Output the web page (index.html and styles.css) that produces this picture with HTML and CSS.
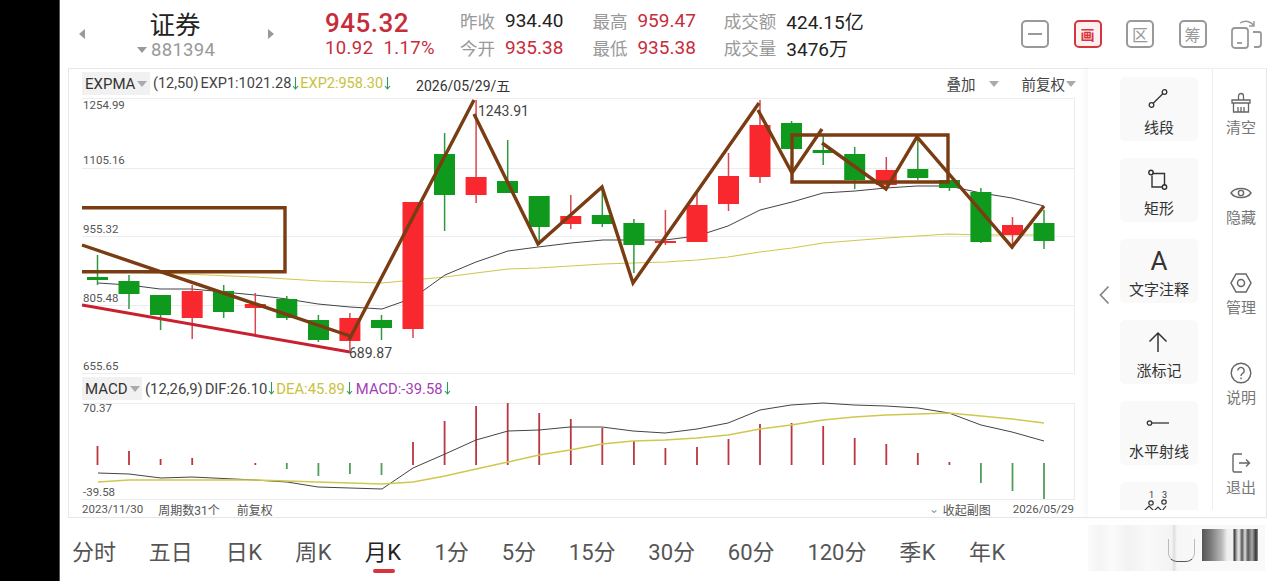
FILE: index.html
```html
<!DOCTYPE html>
<html lang="zh-CN">
<head>
  <meta charset="UTF-8" />
  <title>证券 881394</title>
  <link rel="stylesheet" href="styles.css">
</head>
<body>
  <div class="bezel"></div>
  <div class="app">
    <header class="top">
      <span class="arrow-left"></span>
      <div class="name">
        <div class="name-title">证券</div>
        <div class="name-code"><span class="tri"></span>881394</div>
      </div>
      <span class="arrow-right"></span>
      <div class="price">
        <div class="price-now">945.32</div>
        <div class="price-change">10.92&nbsp;&nbsp;1.17%</div>
      </div>
      <div class="stat stat-a">
        <div class="stat-row"><span class="stat-label">昨收</span><span class="stat-val">934.40</span></div>
        <div class="stat-row"><span class="stat-label">今开</span><span class="stat-val up">935.38</span></div>
      </div>
      <div class="stat stat-b">
        <div class="stat-row"><span class="stat-label">最高</span><span class="stat-val up">959.47</span></div>
        <div class="stat-row"><span class="stat-label">最低</span><span class="stat-val up">935.38</span></div>
      </div>
      <div class="stat stat-c">
        <div class="stat-row"><span class="stat-label">成交额</span><span class="stat-val">424.15亿</span></div>
        <div class="stat-row"><span class="stat-label">成交量</span><span class="stat-val">3476万</span></div>
      </div>
      <div class="modes">
        <div class="mode"><span class="mode-dash"></span></div>
        <div class="mode mode-on">画</div>
        <div class="mode">区</div>
        <div class="mode">筹</div>
        <svg class="mode-rotate" width="31" height="30" viewBox="0 0 31 30" fill="none" stroke="#999" stroke-width="1.8">
          <rect x="1" y="9" width="16" height="20" rx="3"/>
          <path d="M6 24h5"/>
          <path d="M9 4c5-3 11-2 14 3M23 2v5h-5" stroke-width="1.4"/>
          <path d="M22 13h6a2 2 0 0 1 2 2v10a3 3 0 0 1-3 3h-4"/>
        </svg>
      </div>
    </header>

    <div class="middle">
      <section class="chart">
        <div class="chart-head chart-head-main">
          <span class="ind-box ind-box-main">EXPMA<span class="tri tri-light"></span></span>
          <span class="ind-params">(12,50)</span>
          <span class="ind-v">EXP1:1021.28</span>
          <svg class="down" width="7" height="13" viewBox="0 0 7 13"><path d="M3.500 0V12M1 9L3.500 12L6 9"/></svg>
          <span class="ind-v ind-yellow">EXP2:958.30</span>
          <svg class="down" width="7" height="13" viewBox="0 0 7 13"><path d="M3.500 0V12M1 9L3.500 12L6 9"/></svg>
          <span class="chart-date">2026/05/29/五</span>
          <span class="chart-opts">
            <span>叠加</span><span class="tri tri-light opt-tri"></span>
            <span class="opt-fq">前复权</span><span class="tri tri-light"></span>
          </span>
        </div>

        <svg class="plot plot-main" width="993" height="276" viewBox="82 98 993 276">
          <path class="grid" d="M82 98.500H1075M82 168.500H1075M82 236.500H1075M82 305.500H1075M82 373.500H1075M1074.500 98V374"/>
          <polyline class="ma-yellow" points="98,272 160,273 255,277 320,281 382,283 413,280 445,277 476,273 508,269 538,268 603,264 633,263 665,262 697,260 728,257 760,252 792,248 823,243 886,238 917,236 949,234 981,235 1044,235"/>
          <polyline class="ma-black" points="98,283 129,285 160,289 192,289 255,295 287,299 318,304 350,307 382,309 413,298 445,275 476,262 508,251 538,247 571,243 603,240 633,240 665,240 697,236 728,226 760,210 792,202 823,193 855,191 886,188 917,186 949,186 981,193 1012,198 1044,206"/>

          <path class="wick-green" d="M97.500 255V285M129 275V309M160.600 295V330M223.700 285V318M286.800 296V320M318.400 315V342M381.500 315V340M444.600 133V231M507.700 140V193M539.200 196V245M602.300 190V227M633.900 219V273M791.600 121V149M823.200 135V165M854.700 147V189M917.800 140V180M949.400 180V191M980.900 188V243M1044 210V249"/>
          <path class="wick-red" d="M192.200 285V339M255.300 293V334M349.900 313V350M413 202V338M476.100 100V203M570.800 195V229M665.400 210V245M697 192V242M728.500 153V211M760 100V183M886.300 157V190M1012.500 217V249"/>
          <path class="body-green" d="M87 277h21v3h-21zM118.500 281h21v13h-21zM150 295h21v20h-21zM213 291h21v21h-21zM276.300 299h21v19h-21zM308 320h21v20h-21zM371 320h21v8h-21zM434 154h21v41h-21zM497 181h21v12h-21zM528.700 196h21v31h-21zM591.800 215h21v9h-21zM623.400 223h21v22h-21zM781 123h21v26h-21zM812.700 150h21v3h-21zM844.200 154h21v26h-21zM907.300 169h21v9h-21zM939 180h21v8h-21zM970.400 192h21v50h-21zM1033.500 223h21v18h-21z"/>
          <path class="body-red" d="M181.700 291h21v27h-21zM244.800 304h21v4h-21zM339.400 318h21v23h-21zM402.500 202h21v127h-21zM465.600 177h21v18h-21zM560.300 216h21v8h-21zM654.900 241h21v2h-21zM686.500 205h21v37h-21zM718 176h21v28h-21zM749.500 125h21v52h-21zM875.800 170h21v15h-21zM1002 225h21v10h-21z"/>

          <line class="trend-red" x1="82" y1="305" x2="350" y2="352"/>
          <path class="draw" d="M82 207.700H285V271.700H82"/>
          <path class="draw" d="M792 135H948V182H792Z"/>
          <path class="draw" d="M82 245L350 336M349 340L474 100M474 114L538 244L602 187L633 283L759 103M758 110L792 173L822 129M822 143L886 189L917 137L1012 247L1044 206"/>

          <text class="axis" x="83" y="109">1254.99</text>
          <text class="axis" x="83" y="164">1105.16</text>
          <text class="axis" x="83" y="233">955.32</text>
          <text class="axis" x="83" y="302">805.48</text>
          <text class="axis" x="83" y="370">655.65</text>
          <text class="mark" x="478" y="116">1243.91</text>
          <text class="mark" x="349" y="358">689.87</text>
        </svg>

        <div class="chart-head">
          <span class="ind-box ind-box-macd">MACD<span class="tri tri-light"></span></span>
          <span class="ind-params">(12,26,9)</span>
          <span class="ind-v">DIF:26.10</span>
          <svg class="down" width="7" height="13" viewBox="0 0 7 13"><path d="M3.500 0V12M1 9L3.500 12L6 9"/></svg>
          <span class="ind-v ind-yellow">DEA:45.89</span>
          <svg class="down" width="7" height="13" viewBox="0 0 7 13"><path d="M3.500 0V12M1 9L3.500 12L6 9"/></svg>
          <span class="ind-v ind-purple ind-gap">MACD:-39.58</span>
          <svg class="down" width="7" height="13" viewBox="0 0 7 13"><path d="M3.500 0V12M1 9L3.500 12L6 9"/></svg>
        </div>

        <svg class="plot plot-macd" width="993" height="97" viewBox="82 403 993 97">
          <path class="grid" d="M82 403.500H1075M82 499.500H1075M1074.500 403V500"/>
          <path class="bar-red" d="M97.500 446V465M129 451V465M160.600 459V465M192.200 458V465M255.300 463V465M413 442V465M444.600 421V465M476.100 406V465M507.700 403V465M539.200 413V465M570.800 419V465M602.300 428V465M633.900 441V465M665.400 448V465M697 447V465M728.500 439V465M760 424V465M791.600 423V465M823.200 426V465M854.700 438V465M886.300 444V465M917.800 453V465M949.400 462V465"/>
          <path class="bar-green" d="M286.800 463V469M318.400 463V476M349.900 463V474M381.500 463V475M980.900 463V483M1012.500 463V491M1044 463V499"/>
          <polyline class="ma-black" points="98,473 129,474 161,478 192,477 255,480 287,482 318,487 350,488 382,489 413,468 445,454 476,440 508,431 539,430 570,427 602,427 633,431 665,433 697,429 728,423 760,410 791,405 823,403 854,405 886,406 918,408 949,413 981,425 1012,432 1044,441"/>
          <polyline class="ma-yellow ma-thick" points="98,482 129,480 192,480 255,480 318,482 382,484 413,482 445,476 476,469 508,462 539,455 570,450 602,444 633,441 665,440 697,438 728,435 760,429 791,425 823,420 854,417 886,415 918,414 949,413 981,416 1012,419 1044,423"/>
          <text class="axis" x="83" y="412">70.37</text>
          <text class="axis" x="83" y="496">-39.58</text>
        </svg>

        <div class="chart-foot">
          <span class="foot-date">2023/11/30</span>
          <span class="foot-count">周期数31个</span>
          <span class="foot-fq">前复权</span>
          <span class="foot-right">
            <span class="foot-fold">⌄</span><span>收起副图</span>
            <span class="foot-date foot-end">2026/05/29</span>
          </span>
        </div>
      </section>

      <aside class="tools">
        <span class="tools-back">
          <svg width="11" height="20" viewBox="0 0 11 20" fill="none" stroke="#888" stroke-width="1.8"><path d="M9.500 1.500L1.500 10L9.500 18.500"/></svg>
        </span>
        <div class="tool-list">
          <div class="tool">
            <svg width="24" height="24" viewBox="0 0 24 24" fill="none" stroke="#333" stroke-width="1.3"><circle cx="5.500" cy="18" r="2.300"/><circle cx="18.500" cy="5" r="2.300"/><path d="M7.200 16.300L16.800 6.700"/></svg>
            <span>线段</span>
          </div>
          <div class="tool">
            <svg width="24" height="24" viewBox="0 0 24 24" fill="none" stroke="#333" stroke-width="1.4"><path d="M6 5.500H18.500V17.500M16.500 19H6V7.500"/><circle cx="5" cy="4.500" r="2.200"/><circle cx="18.500" cy="19" r="2.200"/></svg>
            <span>矩形</span>
          </div>
          <div class="tool">
            <span class="tool-a">A</span>
            <span>文字注释</span>
          </div>
          <div class="tool">
            <svg width="24" height="24" viewBox="0 0 24 24" fill="none" stroke="#333" stroke-width="1.5"><path d="M12 22V3M3.500 11.500L12 3L20.500 11.500"/></svg>
            <span>涨标记</span>
          </div>
          <div class="tool">
            <svg width="24" height="24" viewBox="0 0 24 24" fill="none" stroke="#333" stroke-width="1.3"><circle cx="3.500" cy="12" r="2.200"/><path d="M6 12H23"/></svg>
            <span>水平射线</span>
          </div>
          <div class="tool tool-cut">
            <svg width="30" height="24" viewBox="0 0 30 24" fill="none" stroke="#333" stroke-width="1.2">
              <path d="M1 21L6 16L11 21L15 17L19 21L23 16"/>
              <circle cx="8" cy="13" r="2.200"/><circle cx="21" cy="12" r="2.200"/>
              <text class="tool-num" x="6" y="8">1</text><text class="tool-num" x="19" y="8">3</text>
            </svg>
          </div>
        </div>
        <div class="tool-side">
          <div class="side-item">
            <svg width="22" height="22" viewBox="0 0 22 22" fill="none" stroke="#666" stroke-width="1.3"><path d="M8.500 8V4a2.500 2.500 0 0 1 5 0v4M2 8H20V11H2ZM3.500 11V20H18.500V11M8 15V20M11 15V20M14 15V20"/></svg>
            <span>清空</span>
          </div>
          <div class="side-item">
            <svg width="22" height="22" viewBox="0 0 22 22" fill="none" stroke="#666" stroke-width="1.4"><path d="M1 11C5 5 17 5 21 11C17 17 5 17 1 11Z"/><circle cx="11" cy="11" r="2.600"/></svg>
            <span>隐藏</span>
          </div>
          <div class="side-item">
            <svg width="22" height="22" viewBox="0 0 22 22" fill="none" stroke="#666" stroke-width="1.5"><path d="M6 2H16L21 11L16 20H6L1 11Z"/><circle cx="11" cy="11" r="3.500"/></svg>
            <span>管理</span>
          </div>
          <div class="side-item">
            <svg width="22" height="22" viewBox="0 0 22 22" fill="none" stroke="#666" stroke-width="1.4"><circle cx="11" cy="11" r="9.800"/><path d="M7.800 8.600a3.200 3.200 0 1 1 4.800 2.800c-1 .6-1.600 1.200-1.600 2.600"/><path d="M11 15.600v1.600"/></svg>
            <span>说明</span>
          </div>
          <div class="side-item">
            <svg width="22" height="22" viewBox="0 0 22 22" fill="none" stroke="#666" stroke-width="1.4"><path d="M12 2H4.500A1.500 1.500 0 0 0 3 3.500V18.500A1.500 1.500 0 0 0 4.500 20H12M9 11H19.500M16 7.500L19.500 11L16 14.500"/></svg>
            <span>退出</span>
          </div>
        </div>
      </aside>
    </div>

    <nav class="periods">
      <span>分时</span>
      <span>五日</span>
      <span class="tab-k">日K</span>
      <span class="tab-k">周K</span>
      <span class="tab-k period-on">月K</span>
      <span>1分</span>
      <span>5分</span>
      <span>15分</span>
      <span>30分</span>
      <span>60分</span>
      <span>120分</span>
      <span class="tab-k">季K</span>
      <span class="tab-k">年K</span>
      <div class="smear"></div>
    </nav>
  </div>
</body>
</html>
```
FILE: styles.css
```css
* {
  margin: 0;
  padding: 0;
  box-sizing: border-box;
}

html, body {
  height: 581px;
  overflow: hidden;
}

body {
  display: flex;
  font-family: 'Roboto', 'Noto Sans CJK SC', sans-serif;
  background-color: #fff;
  color: #333;
}

.bezel {
  width: 60px;
  background-color: #000;
  border-right: 1px solid #555;
}

.app {
  flex: 1;
  display: flex;
  flex-direction: column;
  min-width: 0;
}

/* top quote bar */
.top {
  height: 68px;
  display: flex;
  align-items: center;
}

.arrow-left, .arrow-right {
  width: 0;
  height: 0;
  border-top: 5px solid transparent;
  border-bottom: 5px solid transparent;
}

.arrow-left {
  margin-left: 19px;
  border-right: 6px solid #999;
}

.arrow-right {
  border-left: 6px solid #999;
}

.name {
  width: 183px;
  padding-left: 50px;
  text-align: center;
}

.name-title {
  width: 100px;
  font-size: 25.5px;
  line-height: 32px;
  color: #222;
  margin-left: -10px;
}

.name-code {
  display: flex;
  align-items: center;
  width: 100px;
  gap: 4px;
  font-size: 18.5px;
  line-height: 20px;
  color: #999;
  letter-spacing: 0.3px;
  margin-left: 2px;
  margin-top: -1px;
}

.tri {
  display: inline-block;
  width: 0;
  height: 0;
  border-left: 5px solid transparent;
  border-right: 5px solid transparent;
  border-top: 6px solid #999;
}

.tri-light {
  border-top-color: #aaa;
}

.price {
  width: 135px;
  margin-left: 51px;
  color: #c72c3b;
}

.price-now {
  font-size: 26px;
  font-weight: 500;
  line-height: 29px;
  letter-spacing: 0.5px;
}

.price-change {
  font-size: 18.5px;
  line-height: 21px;
  letter-spacing: 0.4px;
  white-space: nowrap;
}

.stat-row {
  display: flex;
  align-items: center;
  height: 27px;
  white-space: nowrap;
}

.stat-label {
  font-size: 17.5px;
  color: #999;
  margin-right: 10px;
}

.stat-val {
  font-size: 19px;
  color: #222;
}

.up {
  color: #c72c3b;
}

.stat-b {
  margin-left: 29px;
}

.stat-c {
  margin-left: 28px;
}

.modes {
  display: flex;
  align-items: center;
  gap: 24.5px;
  margin-left: auto;
  margin-right: 18px;
}

.mode {
  width: 28px;
  height: 28px;
  display: flex;
  align-items: center;
  justify-content: center;
  border: 2px solid #999;
  border-radius: 5px;
  font-size: 16px;
  color: #999;
}

.mode-dash {
  width: 14px;
  height: 2px;
  background-color: #999;
}

.mode-on {
  border-color: #d5353d;
  background-color: #fdf0f0;
  color: #d5353d;
  font-size: 14px;
  font-weight: 700;
}

/* chart + tool panel */
.middle {
  height: 450px;
  display: flex;
  margin-left: 8px;
}

.chart {
  width: 1020px;
  border-top: 1px solid #e6e6e6;
  border-left: 1px solid #e6e6e6;
  border-bottom: 1px solid #e6e6e6;
  padding-left: 13px;
}

.chart-head {
  height: 29px;
  display: flex;
  align-items: center;
  font-size: 14.8px;
  color: #444;
  white-space: nowrap;
}

.chart-head-main {
  font-size: 14.5px;
}

.ind-box {
  height: 23px;
  display: flex;
  align-items: center;
  gap: 2px;
  padding-left: 3px;
  background-color: #f1f1f1;
  font-size: 15px;
  color: #333;
}

.ind-box-main {
  width: 68px;
}

.ind-box-macd {
  width: 60px;
}

.ind-params {
  margin-left: 3px;
  margin-right: 2px;
}

.ind-yellow {
  color: #c9c23c;
}

.ind-purple {
  color: #a33db6;
}

.ind-gap {
  margin-left: 2px;
}

.down {
  flex: none;
  margin: 0 1px;
  fill: none;
  stroke: #2c9a58;
  stroke-width: 1.1;
}

.chart-date {
  margin-left: 24px;
  padding-top: 2px;
  font-size: 14px;
  color: #333;
}

.chart-opts {
  margin-left: auto;
  margin-right: 12px;
  display: flex;
  align-items: center;
}

.opt-tri {
  margin-left: 13px;
}

.opt-fq {
  margin-left: 23px;
  margin-right: 1px;
}

.plot {
  display: block;
  overflow: visible;
}

.grid {
  fill: none;
  stroke: #ececec;
  stroke-width: 1;
}

.ma-yellow {
  fill: none;
  stroke: #cfc84e;
  stroke-width: 1.2;
}

.ma-thick {
  stroke-width: 1.6;
}

.ma-black {
  fill: none;
  stroke: #444;
  stroke-width: 1;
}

.wick-green {
  fill: none;
  stroke: #2e9a3e;
  stroke-width: 1.5;
}

.wick-red {
  fill: none;
  stroke: #d8474f;
  stroke-width: 1.5;
}

.body-green {
  fill: #0f9a1e;
}

.body-red {
  fill: #f9282f;
}

.trend-red {
  stroke: #c8202f;
  stroke-width: 3;
}

.draw {
  fill: none;
  stroke: #7a3c12;
  stroke-width: 3.4;
}

.axis {
  font-size: 11.5px;
  fill: #555;
}

.mark {
  font-size: 14px;
  fill: #444;
}

.bar-red {
  fill: none;
  stroke: #bb3640;
  stroke-width: 1.8;
}

.bar-green {
  fill: none;
  stroke: #4f9e5c;
  stroke-width: 1.8;
}

.chart-foot {
  height: 18px;
  display: flex;
  align-items: center;
  font-size: 12px;
  color: #555;
  white-space: nowrap;
}

.foot-date {
  font-size: 11.5px;
}

.foot-count {
  margin-left: 15px;
}

.foot-fq {
  margin-left: 17px;
}

.foot-right {
  margin-left: auto;
  margin-right: 14px;
  display: flex;
  align-items: center;
}

.foot-fold {
  color: #999;
  margin-right: 4px;
  line-height: 8px;
}

.foot-end {
  margin-left: 22px;
}

.tools {
  position: relative;
  width: 179px;
  display: flex;
  border-top: 1px solid #eee;
  border-bottom: 1px solid #e6e6e6;
  border-right: 1px solid #e6e6e6;
  box-shadow: -4px 0 6px rgba(0,0,0,0.03);
}

.tools-back {
  position: absolute;
  left: 11px;
  top: 216px;
  line-height: 0;
}

.tool-list {
  width: 125px;
  height: 441px;
  overflow: hidden;
  padding: 8px 0 0 32px;
  border-right: 1px solid #eee;
}

.tool {
  width: 78px;
  height: 64px;
  margin-bottom: 17px;
  padding-top: 6px;
  display: flex;
  flex-direction: column;
  align-items: center;
  justify-content: center;
  gap: 7px;
  background-color: #f9f9f9;
  border-radius: 5px;
  font-size: 15px;
  line-height: 20px;
  color: #333;
}

.tool svg {
  margin-left: -2px;
}

.tool-a {
  font-size: 26px;
  line-height: 24px;
}

.tool-cut {
  justify-content: flex-start;
  padding-top: 8px;
}

.tool-num {
  font-size: 9px;
  fill: #333;
  stroke: none;
}

.tool-side {
  width: 53px;
  display: flex;
  flex-direction: column;
  padding: 23px 0 0 3px;
}

.side-item {
  flex: 0 0 90px;
  display: flex;
  flex-direction: column;
  align-items: center;
  font-size: 15px;
  line-height: 20px;
  color: #777;
  gap: 4px;
}

/* period tabs */
.periods {
  position: relative;
  flex: 1;
  display: flex;
  align-items: center;
  gap: 32.8px;
  padding: 1px 0 0 12px;
  font-size: 22px;
  color: #555;
}

.tab-k {
  letter-spacing: 0.5px;
}

.period-on {
  position: relative;
  color: #222;
}

.period-on::after {
  content: "";
  position: absolute;
  left: 8px;
  right: 7px;
  bottom: -7px;
  height: 4px;
  border-radius: 2px;
  background-color: #d5353d;
}

/* blurred-out watermark at the bottom right */
.smear {
  position: absolute;
  left: 1028px;
  top: 7px;
  width: 177px;
  height: 46px;
  background:
    linear-gradient(90deg,
      #fbfbfb 0, #f4f4f4 12px, #fbfbfb 24px, #f2f2f2 40px, #f9f9f9 60px, #f3f3f3 84px,
      #ddd 86px, #f6f6f6 89px, #f9f9f9 112px, #f9f9f9 176px);
  filter: blur(0.6px);
}

.smear::before {
  content: "";
  position: absolute;
  left: 80px;
  top: 14px;
  width: 25px;
  height: 22px;
  border: 1px solid #bbb;
  border-top: 0;
  border-bottom-color: #555;
  border-radius: 0 0 9px 9px;
}

.smear::after {
  content: "";
  position: absolute;
  left: 114px;
  top: 4px;
  width: 56px;
  height: 32px;
  background:
    linear-gradient(90deg,
      #555 0, #777 8px, #bbb 20px, #eee 25px, #f2f2f2 31px, #333 32px, #bbb 35px, #eee 37px,
      #555 40px, #ddd 43px, #555 46px, #aaa 50px, #333 54px, #999 56px);
}
```
